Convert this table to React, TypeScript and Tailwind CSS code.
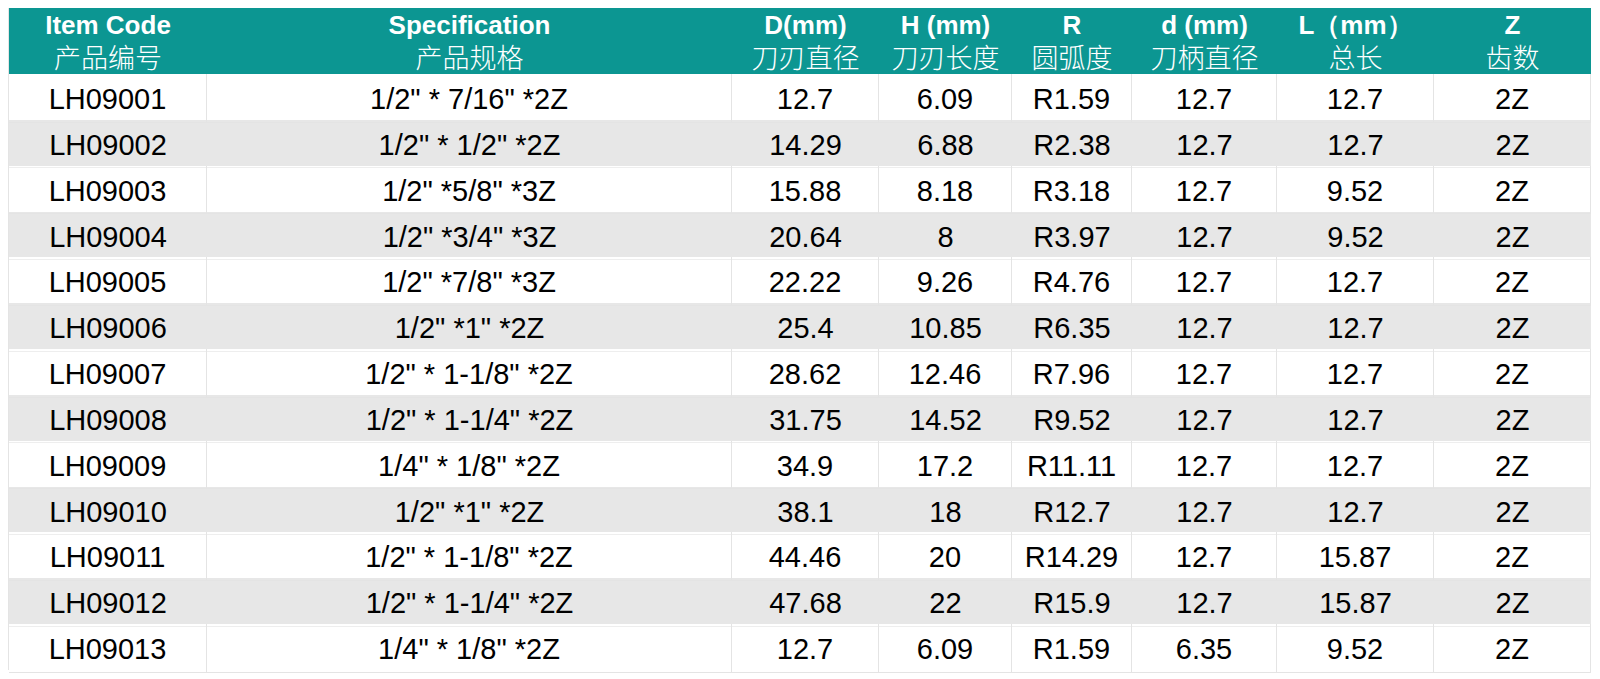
import React from 'react'

const COLS = 'grid-cols-[198px_525px_147px_133px_120px_145px_157px_157px]'

type Row = [string, string, string, string, string, string, string, string]

const HEADERS: [string, string][] = [
  ['Item Code', '产品编号'],
  ['Specification', '产品规格'],
  ['D(mm)', '刀刃直径'],
  ['H (mm)', '刀刃长度'],
  ['R', '圆弧度'],
  ['d (mm)', '刀柄直径'],
  ['L（mm）', '总长'],
  ['Z', '齿数'],
]

const ROWS: Row[] = [
  ['LH09001', '1/2" * 7/16" *2Z', '12.7', '6.09', 'R1.59', '12.7', '12.7', '2Z'],
  ['LH09002', '1/2" * 1/2" *2Z', '14.29', '6.88', 'R2.38', '12.7', '12.7', '2Z'],
  ['LH09003', '1/2" *5/8" *3Z', '15.88', '8.18', 'R3.18', '12.7', '9.52', '2Z'],
  ['LH09004', '1/2" *3/4" *3Z', '20.64', '8', 'R3.97', '12.7', '9.52', '2Z'],
  ['LH09005', '1/2" *7/8" *3Z', '22.22', '9.26', 'R4.76', '12.7', '12.7', '2Z'],
  ['LH09006', '1/2" *1" *2Z', '25.4', '10.85', 'R6.35', '12.7', '12.7', '2Z'],
  ['LH09007', '1/2" * 1-1/8" *2Z', '28.62', '12.46', 'R7.96', '12.7', '12.7', '2Z'],
  ['LH09008', '1/2" * 1-1/4" *2Z', '31.75', '14.52', 'R9.52', '12.7', '12.7', '2Z'],
  ['LH09009', '1/4" * 1/8" *2Z', '34.9', '17.2', 'R11.11', '12.7', '12.7', '2Z'],
  ['LH09010', '1/2" *1" *2Z', '38.1', '18', 'R12.7', '12.7', '12.7', '2Z'],
  ['LH09011', '1/2" * 1-1/8" *2Z', '44.46', '20', 'R14.29', '12.7', '15.87', '2Z'],
  ['LH09012', '1/2" * 1-1/4" *2Z', '47.68', '22', 'R15.9', '12.7', '15.87', '2Z'],
  ['LH09013', '1/4" * 1/8" *2Z', '12.7', '6.09', 'R1.59', '6.35', '9.52', '2Z'],
]

export default function App() {
  return (
    <div className="w-[1600px] h-[679px] bg-white pt-2 pl-2 font-['Liberation_Sans',Arial,sans-serif]">
      <div className="w-[1583px] border-l border-[#e4e4e4]">
        {/* header */}
        <div className={`grid ${COLS} h-[66px] bg-[#0c9692] text-white`}>
          {HEADERS.map(([en, zh]) => (
            <div key={en} className="flex flex-col items-center justify-center">
              <span className="text-[26px] font-bold leading-[32px]">{en}</span>
              <span className="text-[27px] font-light leading-[32px] font-['Noto_Sans_CJK_SC',sans-serif]">
                {zh}
              </span>
            </div>
          ))}
        </div>

        {/* body */}
        {ROWS.map((row, i) => {
          const gray = i % 2 === 1
          return (
            <div
              key={row[0]}
              className={`grid ${COLS} h-[45.85px] ${gray ? 'bg-[#e7e7e7]' : 'bg-white'}`}
            >
              {row.map((cell, j) => (
                <div
                  key={j}
                  className={`flex items-center justify-center pt-[4px] text-[29px] text-black border-b ${
                    gray ? 'border-[#eeeeee]' : 'border-r border-[#e4e4e4]'
                  }`}
                >
                  {cell}
                </div>
              ))}
            </div>
          )
        })}
      </div>
    </div>
  )
}
